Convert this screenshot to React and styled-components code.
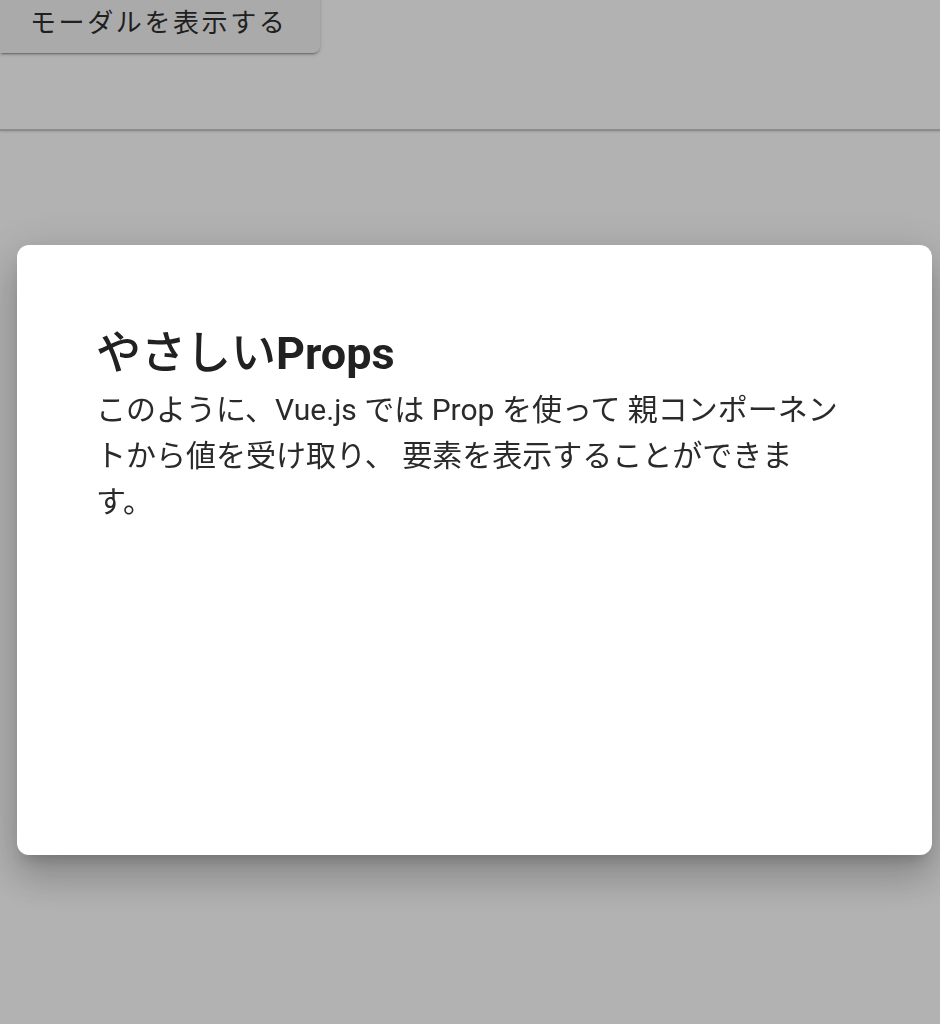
import styled, { createGlobalStyle } from "styled-components";

const Global = createGlobalStyle`
  html, body {
    margin: 0;
    padding: 0;
    background: #fff;
    font-family: Roboto, "Noto Sans CJK JP", sans-serif;
    color: #212121;
  }
  body { overflow: hidden; }
`;

const App = () => {
  return (
    <>
      <Global />
      <Page>
        <Header>
          <OpenButton>モーダルを表示する</OpenButton>
        </Header>
      </Page>
      <Overlay>
        <Dialog>
          <Title>
            <Kana>やさしい</Kana>Props
          </Title>
          <Body>
            このように、Vue.js では Prop を使って 親コンポーネントから値を受け取り、 要素を表示することができます。
          </Body>
        </Dialog>
      </Overlay>
    </>
  );
};

export default App;

/* ---------------------------- STYLED COMPONENTS --------------------------- */

const Page = styled.div`
  min-height: 1024px;
  background: #fff;
`;

const Header = styled.header`
  height: 143px;
  margin-top: -12px;
  border-bottom: 2px solid #c8c8c8;
  box-shadow: 0 1px 2px rgba(0, 0, 0, 0.12);
  box-sizing: border-box;
`;

const OpenButton = styled.button`
  display: block;
  width: 320px;
  height: 65px;
  padding: 0 0 0 30px;
  text-align: left;
  border: none;
  border-radius: 0 0 7px 0;
  background: #f4f4f4;
  color: #2e2e2e;
  font-family: Roboto, "Noto Sans CJK JP", sans-serif;
  font-size: 26px;
  letter-spacing: 2.6px;
  box-shadow: 0 3px 1px -2px rgba(0, 0, 0, 0.2), 0 2px 2px 0 rgba(0, 0, 0, 0.14),
    0 1px 5px 0 rgba(0, 0, 0, 0.12);
`;

const Overlay = styled.div`
  position: fixed;
  inset: 0;
  background: rgba(0, 0, 0, 0.3);
  display: flex;
  align-items: flex-start;
  padding: 245px 0 0 17px;
`;

const Dialog = styled.section`
  width: 915px;
  height: 610px;
  box-sizing: border-box;
  padding: 82px 76px 0 79px;
  background: #fff;
  border-radius: 12px;
  box-shadow: 0 11px 15px -7px rgba(0, 0, 0, 0.2), 0 24px 38px 3px rgba(0, 0, 0, 0.14),
    0 9px 46px 8px rgba(0, 0, 0, 0.12);
`;

const Title = styled.h2`
  margin: 0;
  font-size: 45px;
  line-height: 54px;
  font-weight: 700;
  color: #212121;
`;

const Kana = styled.span`
  font-weight: 500;
`;

const Body = styled.p`
  margin: 6px 0 0;
  max-width: 750px;
  font-size: 30px;
  line-height: 46px;
  color: #2a2a2a;
`;
